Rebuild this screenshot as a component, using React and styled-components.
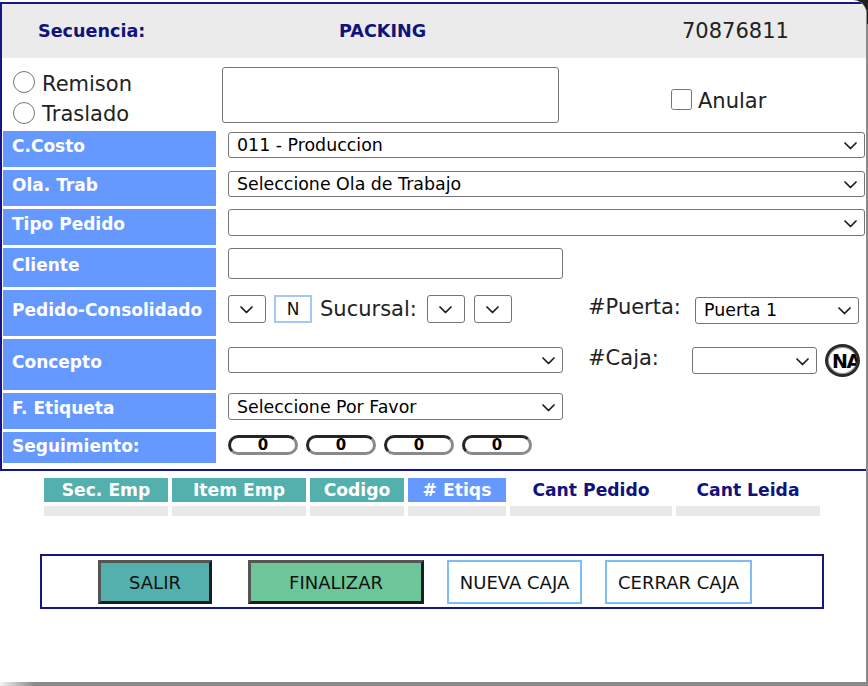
import React from 'react';
import styled, { createGlobalStyle } from 'styled-components';

const Global = createGlobalStyle`
  html, body { margin: 0; padding: 0; background: #fff; }
  body { font-family: "DejaVu Sans", Verdana, sans-serif; }
  * { box-sizing: border-box; }
`;

const NAVY = '#16168a';
const BLUE = '#6699ff';
const TEAL = '#53b0ad';

const Screen = styled.div`
  position: relative;
  width: 868px;
  height: 686px;
  overflow: hidden;
  background: linear-gradient(to right, #f4f4f4 0, #8a8a8a 34px);
  &::before {
    content: '';
    position: absolute;
    top: 0;
    right: 0;
    width: 24px;
    height: 24px;
    background: #1e1e1e;
  }
`;

const Frame = styled.div`
  position: relative;
  z-index: 1;
  width: 867px;
  height: 682px;
  background: #fff;
  border-right: 1px solid #8a8a8a;
  border-top-right-radius: 14px;
  border-top-left-radius: 3px;
  overflow: hidden;
`;

const FormBox = styled.div`
  margin-top: 2px;
  width: 866px;
  border: 2px solid ${NAVY};
  border-right: none;
`;

const Header = styled.div`
  display: grid;
  grid-template-columns: 337px 343px 1fr;
  align-items: center;
  height: 54px;
  background: #ebebeb;
`;

const HeadText = styled.div`
  padding-left: ${p => p.$pl || 0}px;
  font-size: ${p => p.$size || 17.6}px;
  font-weight: ${p => (p.$plain ? 'normal' : 'bold')};
  color: ${p => (p.$plain ? '#222' : '#12127c')};
`;

const Body = styled.div`
  display: grid;
  grid-template-columns: 213px 1fr;
  column-gap: 12px;
  row-gap: 3px;
  padding: 0 0 6px 1px;
`;

const Label = styled.div`
  height: ${p => p.$h}px;
  background: ${BLUE};
  color: #fff;
  font-weight: bold;
  font-size: 17px;
  display: flex;
  align-items: center;
  padding: 0 0 ${p => (p.$pb ?? 6)}px 9px;
  white-space: nowrap;
`;

const Cell = styled.div`
  display: flex;
  align-items: ${p => p.$align || 'flex-start'};
  padding-top: ${p => p.$pt || 0}px;
  min-width: 0;
`;

const RadioBox = styled.div`
  height: 70px;
  padding: 9px 0 0 10px;
  display: flex;
  flex-direction: column;
`;

const RadioLine = styled.label`
  height: 32px;
  display: flex;
  align-items: center;
  gap: 7px;
  font-size: 21px;
  color: #222;
`;

const RadioText = styled.span`
  padding-top: 3px;
`;

const Radio = styled.input.attrs({ type: 'radio' })`
  width: 22px;
  height: 22px;
  margin: 0;
`;

const Check = styled.input.attrs({ type: 'checkbox' })`
  width: 21px;
  height: 21px;
  margin: 0;
`;

const CheckLine = styled.label`
  display: flex;
  align-items: center;
  gap: 6px;
  font-size: 21px;
  color: #222;
  margin: 27px 0 0 112px;
`;

const CheckText = styled.span`
  padding-top: 4px;
`;

const TextArea = styled.textarea`
  width: 337px;
  height: 56px;
  margin: 9px 0 0 -6px;
  border: 1px solid #767676;
  border-radius: 3px;
  resize: none;
`;

const SelectWrap = styled.div`
  position: relative;
  flex-shrink: 0;
  width: ${p => p.$w}px;
  height: ${p => p.$h || 27}px;
  margin-top: ${p => p.$mt || 0}px;
  margin-left: ${p => p.$ml || 0}px;
`;

const SelectBox = styled.select`
  appearance: none;
  width: 100%;
  height: 100%;
  font-family: "DejaVu Sans", Verdana, sans-serif;
  font-size: 17.4px;
  color: #000;
  background: #fff;
  border: 1px solid #767676;
  border-radius: 3px;
  padding: 0 24px 0 8px;
  outline: none;
`;

const Chevron = styled.svg`
  position: absolute;
  right: ${p => p.$right}px;
  top: 50%;
  margin-top: -3px;
  pointer-events: none;
`;

function Dropdown({ w, h, mt, ml, value = '' }) {
  const right = w < 60 ? Math.round((w - 13) / 2) : 8;
  return (
    <SelectWrap $w={w} $h={h} $mt={mt} $ml={ml}>
      <SelectBox defaultValue={value}>
        <option value={value}>{value}</option>
      </SelectBox>
      <Chevron $right={right} width="13" height="8" viewBox="0 0 13 8">
        <polyline points="1,1 6.5,6.5 12,1" fill="none" stroke="#1c1c1c" strokeWidth="1.7" strokeLinecap="round" strokeLinejoin="round" />
      </Chevron>
    </SelectWrap>
  );
}

const TextInput = styled.input`
  width: ${p => p.$w}px;
  height: ${p => p.$h}px;
  border: 1px solid #767676;
  border-radius: 3px;
  font-size: 17px;
`;

const NBox = styled.input`
  width: 38px;
  height: 28px;
  margin-left: 8px;
  border: 2px solid #a3c9f2;
  text-align: center;
  font-family: "DejaVu Sans", Verdana, sans-serif;
  font-size: 17px;
  color: #111;
  padding: 0;
`;

const Text = styled.span`
  font-size: 21px;
  color: #222;
  margin-left: ${p => p.$ml || 0}px;
  white-space: nowrap;
`;

const LeftPart = styled.div`
  width: 360px;
  display: flex;
  align-items: center;
  flex-shrink: 0;
`;

const SideLabel = styled.div`
  width: ${p => p.$w}px;
  font-size: 21px;
  color: #222;
  padding-bottom: 6px;
  white-space: nowrap;
`;

const RightPart = styled.div`
  display: flex;
  align-items: center;
`;

const NaButton = styled.button`
  width: 35px;
  height: 33px;
  margin-left: 8px;
  border-radius: 50%;
  border: 3px solid #2a2a2a;
  box-shadow: inset 0 0 0 1px #9a9a9a;
  background: #fff;
  font-family: "DejaVu Sans", Verdana, sans-serif;
  font-weight: bold;
  font-size: 19px;
  letter-spacing: -1.5px;
  color: #000;
  padding: 0 0 0 4px;
  text-align: left;
  white-space: nowrap;
  overflow: hidden;
`;

const Pills = styled.div`
  display: flex;
  gap: 8px;
`;

const Pill = styled.input`
  width: 70px;
  height: 20px;
  border: 3px solid;
  border-color: #262626 #8a8a8a #8a8a8a #262626;
  border-radius: 10px;
  text-align: center;
  font-family: "DejaVu Sans", Verdana, sans-serif;
  font-weight: bold;
  font-size: 15px;
  line-height: 14px;
  padding: 0;
  color: #000;
  background: #fff;
`;

const Grid = styled.div`
  display: grid;
  grid-template-columns: 124px 134px 94px 98px 162px 144px;
  gap: 4px;
  padding: 4px;
  margin: 3px 0 0 40px;
  width: 788px;
`;

const HeadCell = styled.div`
  height: 24px;
  background: ${p => p.$bg || 'transparent'};
  color: ${p => (p.$bg ? '#fff' : '#12127c')};
  font-weight: bold;
  font-size: 17.2px;
  display: flex;
  align-items: center;
  justify-content: center;
  white-space: nowrap;
`;

const DataCell = styled.div`
  height: 10px;
  background: #e9e9e9;
`;

const ButtonBar = styled.div`
  margin: 34px 0 0 40px;
  width: 784px;
  height: 55px;
  border: 2px solid ${NAVY};
  display: flex;
  align-items: flex-start;
  padding: 4px 0 0 56px;
`;

const Button = styled.button`
  width: ${p => p.$w}px;
  height: 44px;
  margin-left: ${p => p.$ml || 0}px;
  font-family: "DejaVu Sans", Verdana, sans-serif;
  font-size: 18px;
  color: #111;
  background: ${p => p.$bg || '#fff'};
  border: ${p => (p.$light ? '2px solid #7dbcf4' : '3px solid')};
  border-color: ${p => (p.$light ? '#7dbcf4' : '#555 #1e1e1e #1e1e1e #555')};
  padding: 0;
`;

export default function App() {
  return (
    <>
      <Global />
      <Screen>
        <Frame>
          <FormBox>
            <Header>
              <HeadText $pl={36}>Secuencia:</HeadText>
              <HeadText>PACKING</HeadText>
              <HeadText $plain $size={21}>70876811</HeadText>
            </Header>
            <Body>
              <RadioBox>
                <RadioLine><Radio name="t" /><RadioText>Remison</RadioText></RadioLine>
                <RadioLine><Radio name="t" /><RadioText>Traslado</RadioText></RadioLine>
              </RadioBox>
              <Cell>
                <TextArea />
                <CheckLine><Check /><CheckText>Anular</CheckText></CheckLine>
              </Cell>

              <Label $h={36}>C.Costo</Label>
              <Cell $pt={1}>
                <Dropdown w={637} h={26} value="011 - Produccion" />
              </Cell>

              <Label $h={36}>Ola. Trab</Label>
              <Cell $pt={1}>
                <Dropdown w={637} h={26} value="Seleccione Ola de Trabajo" />
              </Cell>

              <Label $h={36}>Tipo Pedido</Label>
              <Cell>
                <Dropdown w={637} h={27} />
              </Cell>

              <Label $h={39}>Cliente</Label>
              <Cell>
                <TextInput $w={335} $h={31} />
              </Cell>

              <Label $h={46}>Pedido-Consolidado</Label>
              <Cell $pt={5}>
                <LeftPart>
                  <Dropdown w={38} h={28} />
                  <NBox defaultValue="N" readOnly />
                  <Text $ml={8}>Sucursal:</Text>
                  <Dropdown w={38} h={28} ml={10} />
                  <Dropdown w={38} h={28} ml={9} />
                </LeftPart>
                <RightPart>
                  <SideLabel $w={107}>#Puerta:</SideLabel>
                  <Dropdown w={164} h={27} value="Puerta 1" />
                </RightPart>
              </Cell>

              <Label $h={51}>Concepto</Label>
              <Cell $pt={5}>
                <LeftPart>
                  <Dropdown w={335} h={26} mt={3} />
                </LeftPart>
                <RightPart>
                  <SideLabel $w={104}>#Caja:</SideLabel>
                  <Dropdown w={125} h={27} />
                  <NaButton>NA</NaButton>
                </RightPart>
              </Cell>

              <Label $h={36}>F. Etiqueta</Label>
              <Cell>
                <Dropdown w={335} h={27} value="Seleccione Por Favor" />
              </Cell>

              <Label $h={31} $pb={4}>Seguimiento:</Label>
              <Cell $pt={3}>
                <Pills>
                  <Pill defaultValue="0" readOnly />
                  <Pill defaultValue="0" readOnly />
                  <Pill defaultValue="0" readOnly />
                  <Pill defaultValue="0" readOnly />
                </Pills>
              </Cell>
            </Body>
          </FormBox>

          <Grid>
            <HeadCell $bg={TEAL}>Sec. Emp</HeadCell>
            <HeadCell $bg={TEAL}>Item Emp</HeadCell>
            <HeadCell $bg={TEAL}>Codigo</HeadCell>
            <HeadCell $bg={BLUE}># Etiqs</HeadCell>
            <HeadCell>Cant Pedido</HeadCell>
            <HeadCell>Cant Leida</HeadCell>
            <DataCell />
            <DataCell />
            <DataCell />
            <DataCell />
            <DataCell />
            <DataCell />
          </Grid>

          <ButtonBar>
            <Button $w={114} $bg={TEAL}>SALIR</Button>
            <Button $w={176} $bg="#6cc69a" $ml={36}>FINALIZAR</Button>
            <Button $w={135} $light $ml={23}>NUEVA CAJA</Button>
            <Button $w={147} $light $ml={23}>CERRAR CAJA</Button>
          </ButtonBar>
        </Frame>
      </Screen>
    </>
  );
}
